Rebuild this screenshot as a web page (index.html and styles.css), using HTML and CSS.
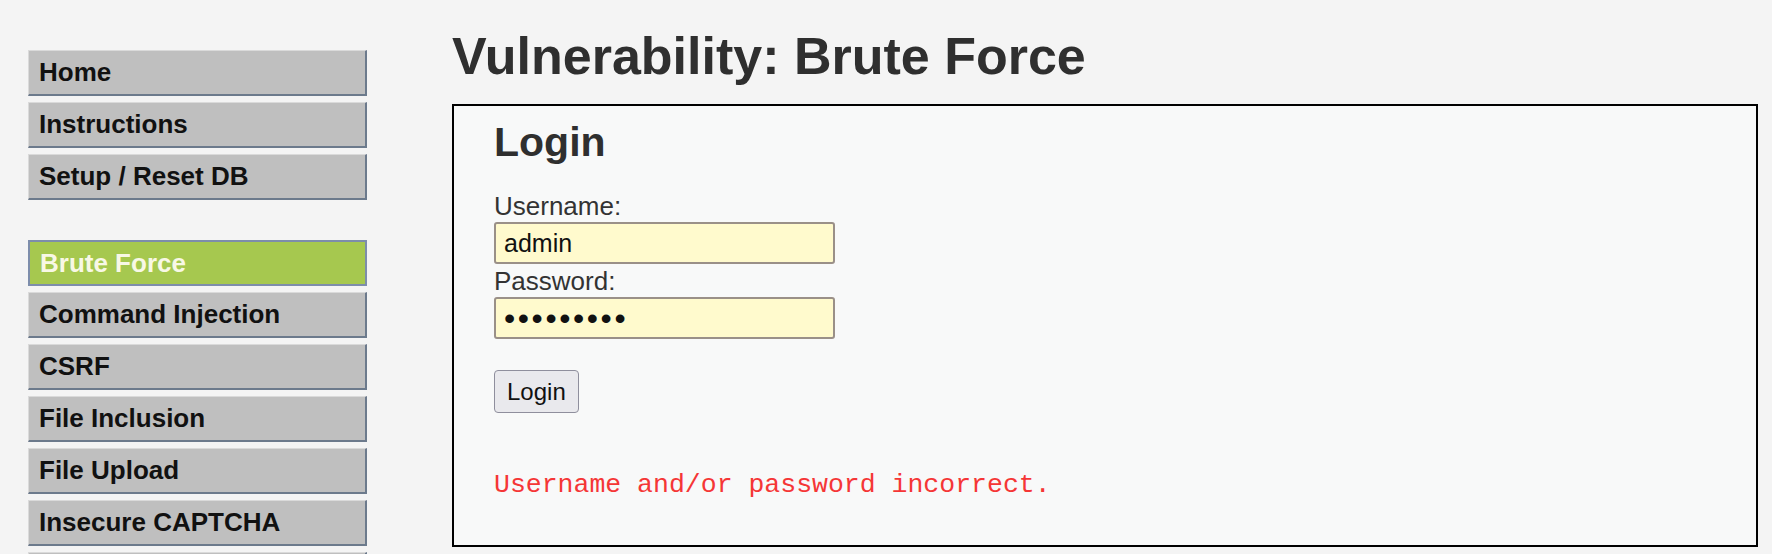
FILE: index.html
```html
<!DOCTYPE html>
<html lang="en">
<head>
<meta charset="utf-8">
<title>Vulnerability: Brute Force</title>
<link rel="stylesheet" href="styles.css">
</head>
<body>
<div class="page">
  <nav class="sidebar">
    <ul class="menu-block">
      <li><a class="menu-item" href="#">Home</a></li>
      <li><a class="menu-item" href="#">Instructions</a></li>
      <li><a class="menu-item" href="#">Setup / Reset DB</a></li>
    </ul>
    <ul class="menu-block">
      <li><a class="menu-item active" href="#">Brute Force</a></li>
      <li><a class="menu-item" href="#">Command Injection</a></li>
      <li><a class="menu-item" href="#">CSRF</a></li>
      <li><a class="menu-item" href="#">File Inclusion</a></li>
      <li><a class="menu-item" href="#">File Upload</a></li>
      <li><a class="menu-item" href="#">Insecure CAPTCHA</a></li>
      <li><span class="menu-item menu-more" aria-hidden="true"></span></li>
    </ul>
  </nav>
  <main class="main">
    <h1 class="title">Vulnerability: Brute Force</h1>
    <div class="code-area">
      <h2 class="login-title">Login</h2>
      <form class="login-form" action="#">
        <label class="field-label" for="username">Username:</label>
        <input class="field-input" id="username" type="text" name="username" value="admin">
        <label class="field-label second" for="password">Password:</label>
        <input class="field-input password" id="password" type="password" name="password" value="123456789">
        <button class="login-btn" type="button">Login</button>
      </form>
      <pre class="error">Username and/or password incorrect.</pre>
    </div>
  </main>
</div>
</body>
</html>
```

FILE: styles.css
```css
html, body {
  margin: 0;
  padding: 0;
  overflow: hidden;
}

body {
  background: #f4f4f4;
  font-family: "Liberation Sans", Arial, sans-serif;
  color: #333;
}

.page {
  display: flex;
  align-items: flex-start;
}

.sidebar {
  padding: 50px 0 0 28px;
  width: 339px;
  flex: none;
}

.menu-block {
  list-style: none;
  margin: 0 0 40px 0;
  padding: 0;
  display: flex;
  flex-direction: column;
  gap: 6px;
}

.menu-item {
  display: block;
  box-sizing: border-box;
  height: 46px;
  padding-left: 10px;
  background: #bfbfbf;
  border-top: 1px solid #dadada;
  border-left: 1px solid #dadada;
  border-right: 2px solid #6c7a8c;
  border-bottom: 2px solid #6c7a8c;
  color: #111;
  font-weight: bold;
  font-size: 26px;
  line-height: 43px;
  text-decoration: none;
  white-space: nowrap;
  overflow: hidden;
}

.menu-item.active {
  background: #a6c84f;
  border: 2px solid #7d8dab;
  color: #f8f8e6;
  line-height: 42px;
}

.main {
  margin-left: 85px;
  margin-right: 14px;
  flex: 1;
  padding-top: 26px;
}

.title {
  margin: 0;
  font-size: 52px;
  line-height: 60px;
  font-weight: bold;
  color: #2f2f2f;
}

.code-area {
  margin-top: 18px;
  border: 2px solid #000;
  background: #f8f9f9;
  padding: 12px 40px 45px 40px;
}

.login-title {
  margin: 0;
  font-size: 41px;
  line-height: 48px;
  font-weight: bold;
  color: #2f2f2f;
}

.login-form {
  display: flex;
  flex-direction: column;
  align-items: flex-start;
}

.field-label {
  display: block;
  margin-top: 25px;
  font-size: 26px;
  line-height: 30px;
  color: #333;
}

.field-label.second {
  margin-top: 2px;
}

.field-input {
  box-sizing: border-box;
  margin: 1px 0 0 0;
  width: 341px;
  height: 42px;
  padding: 0 8px;
  border: 2px solid #9a9088;
  border-radius: 3px;
  background: #fffacd;
  font-family: "Liberation Sans", Arial, sans-serif;
  font-size: 25px;
  color: #111;
  outline: none;
}

.field-input.password {
  font-size: 32px;
  letter-spacing: 2.6px;
}

.login-btn {
  box-sizing: border-box;
  margin-top: 31px;
  height: 43px;
  padding: 0 12px;
  background: #e9e9ed;
  border: 1px solid #8f8f9d;
  border-radius: 4px;
  font-family: "Liberation Sans", Arial, sans-serif;
  font-size: 24px;
  color: #111;
}

.error {
  margin: 57px 0 0 0;
  font-family: "Liberation Mono", "Courier New", monospace;
  font-size: 26.5px;
  line-height: 30px;
  color: #f53636;
}
```
